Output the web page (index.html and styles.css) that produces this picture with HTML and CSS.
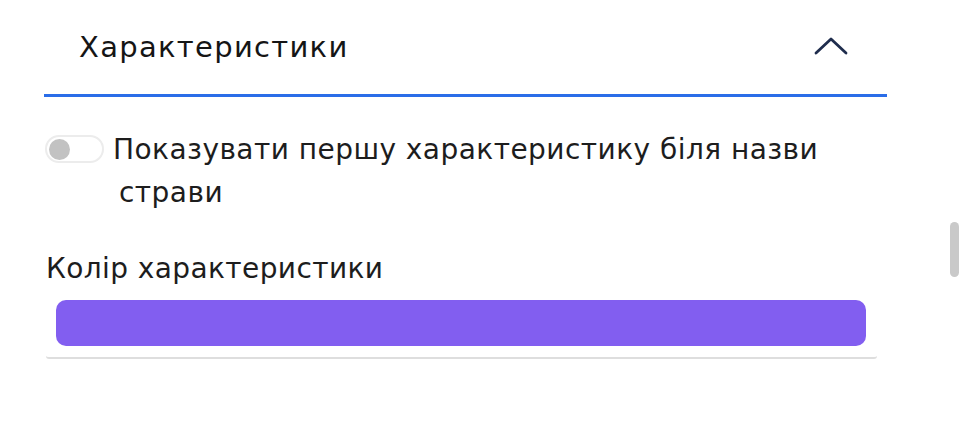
FILE: index.html
```html
<!DOCTYPE html>
<html lang="uk">
<head>
<meta charset="utf-8">
<link rel="stylesheet" href="styles.css">
</head>
<body>
<div class="page">
  <section class="panel">
    <header class="panel-head">
      <h2 class="panel-title">Характеристики</h2>
      <svg class="chevron" width="34" height="20" viewBox="0 0 34 20"><path d="M2 17 L17 3 L32 17" fill="none" stroke="#1f2d4d" stroke-width="2.8" stroke-linecap="round" stroke-linejoin="round"/></svg>
    </header>
    <div class="panel-body">
      <div class="toggle-row">
        <span class="toggle"><span class="knob"></span></span>
        <span class="toggle-label">Показувати першу характеристику біля назви<br><span class="indent">страви</span></span>
      </div>
      <div class="field-label">Колір характеристики</div>
      <div class="color-field"><div class="swatch"></div></div>
    </div>
  </section>
  <div class="scrollbar"><div class="thumb"></div></div>
</div>
</body>
</html>
```
FILE: styles.css
```css
html, body { margin: 0; padding: 0; background: #fff; }
body { font-family: "DejaVu Sans", "Noto Sans", sans-serif; color: #1b1b1b; width: 974px; height: 431px; overflow: hidden; }
.page { display: flex; padding-left: 44px; height: 431px; }
.panel { width: 843px; }
.panel-head { height: 94px; display: flex; align-items: center; justify-content: space-between; padding: 0 39px 0 36px; border-bottom: 3px solid #2a6de8; box-sizing: content-box; }
.panel-title { margin: 0 0 0 -1px; font-weight: 400; font-size: 29px; letter-spacing: 1.3px; color: #151515; line-height: 1; }
.chevron { margin-bottom: 3px; }
.panel-body { padding-top: 38px; }
.toggle-row { display: flex; align-items: flex-start; }
.toggle { width: 59px; height: 28px; border: 2px solid #ececec; border-radius: 14px; box-sizing: border-box; display: flex; align-items: center; padding-left: 2px; margin: 0 9px 0 1px; flex: none; }
.knob { width: 21px; height: 21px; border-radius: 50%; background: #c2c2c2; }
.toggle-label { font-size: 28px; letter-spacing: 0.45px; line-height: 43px; margin-top: -7px; color: #1d1d1d; }
.indent { padding-left: 6px; }
.field-label { font-size: 28px; letter-spacing: 0.4px; margin-top: 40px; margin-left: 2px; color: #1d1d1d; line-height: 30px; }
.color-field { margin: 8px 10px 0 2px; padding: 8px 11px 11px 10px; border-bottom: 2px solid #dedede; border-radius: 0 0 3px 3px; }
.swatch { height: 46px; border-radius: 10px; background: #825ef0; }
.scrollbar { margin-left: 63px; padding-top: 222px; }
.thumb { width: 9px; height: 55px; border-radius: 5px; background: #c9c9c9; }
```
